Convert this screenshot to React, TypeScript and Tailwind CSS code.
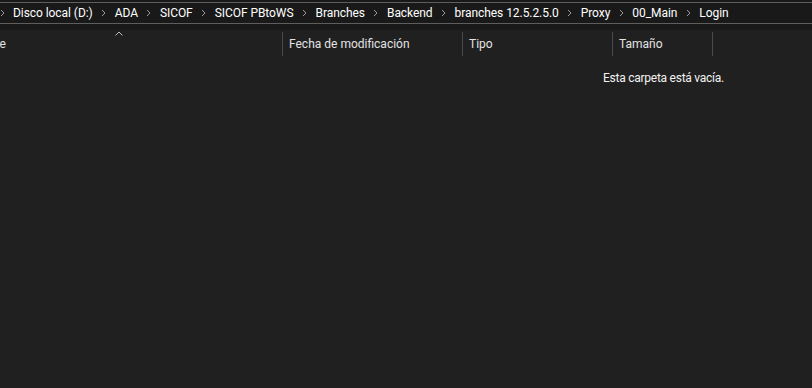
import React from "react";

const crumbs = [
  "Disco local (D:)",
  "ADA",
  "SICOF",
  "SICOF PBtoWS",
  "Branches",
  "Backend",
  "branches 12.5.2.5.0",
  "Proxy",
  "00_Main",
  "Login",
];

const Chevron = () => (
  <span className="flex w-[22px] shrink-0 items-center justify-center">
    <svg width="5" height="8" viewBox="0 0 5 8" fill="none">
      <path d="M1 1l3 3-3 3" stroke="#9a9a9a" strokeWidth="1" />
    </svg>
  </span>
);

const columns = [
  { label: "Fecha de modificación", width: "w-[180px]" },
  { label: "Tipo", width: "w-[150px]" },
  { label: "Tamaño", width: "w-[100px]" },
];

export default function App() {
  return (
    <div
      className="w-[812px] h-[388px] overflow-hidden bg-[#202020] text-[12px] text-white"
      style={{ fontFamily: 'Roboto, "Noto Sans", sans-serif' }}
    >
      {/* barra de direcciones */}
      <div className="bg-[#191919] pt-[2px] pb-[6px]">
        <div className="flex h-[22px] items-center border-y border-[#5e5e5e] ml-[-9px] w-[830px] whitespace-nowrap tracking-[-0.06px]">
          {crumbs.map((c) => (
            <React.Fragment key={c}>
              <Chevron />
              <span className="leading-none">{c}</span>
            </React.Fragment>
          ))}
        </div>
      </div>

      {/* cabecera de columnas */}
      <div className="relative flex h-[26px] items-center pt-[2px] text-[#e3e3e3] whitespace-nowrap">
        <div className="w-[282px] shrink-0 overflow-hidden">
          <span className="ml-[-37px] inline-block">Nombre</span>
        </div>
        <svg
          className="absolute left-[115px] top-[1px]"
          width="8"
          height="5"
          viewBox="0 0 8 5"
          fill="none"
        >
          <path d="M0.5 4.5l3.5-3.5 3.5 3.5" stroke="#bdbdbd" strokeWidth="1" />
        </svg>
        {columns.map((col) => (
          <div
            key={col.label}
            className={`flex h-full ${col.width} shrink-0 items-center border-l border-[#4a4a4a] pl-[6px]`}
          >
            {col.label}
          </div>
        ))}
        <div className="h-full border-l border-[#4a4a4a]" />
      </div>

      <div className="pl-[603px] pt-[13px] text-[#f2f2f2] tracking-[-0.25px]">
        Esta carpeta está vacía.
      </div>
    </div>
  );
}
